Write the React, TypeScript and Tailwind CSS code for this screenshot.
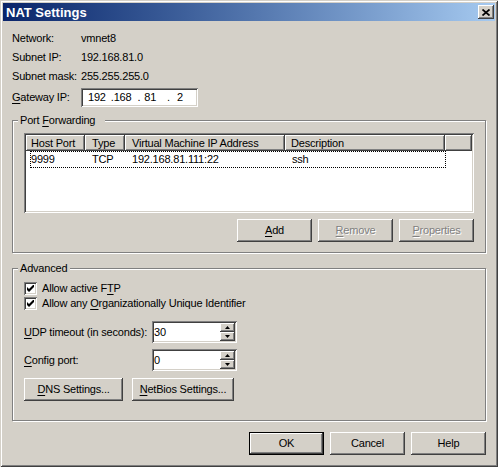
import React from "react";

const RAISED =
  "shadow-[inset_-1px_-1px_#404040,inset_1px_1px_#ffffff,inset_-2px_-2px_#808080,inset_2px_2px_#d4d0c8]";
const SUNKEN =
  "shadow-[inset_1px_1px_#808080,inset_-1px_-1px_#ffffff,inset_2px_2px_#404040,inset_-2px_-2px_#d4d0c8]";
const HEADER =
  "shadow-[inset_-1px_-1px_#404040,inset_1px_1px_#ffffff,inset_-2px_-2px_#808080]";

function U({ children }: { children: React.ReactNode }) {
  return <span className="underline underline-offset-[2px] decoration-1">{children}</span>;
}

function Btn({
  children,
  className = "",
  disabled = false,
  def = false,
}: {
  children: React.ReactNode;
  className?: string;
  disabled?: boolean;
  def?: boolean;
}) {
  return (
    <div
      className={`h-[23px] flex items-center justify-center bg-[#d4d0c8] ${RAISED} ${
        def ? "border border-black" : ""
      } ${disabled ? "text-[#808080] [text-shadow:1px_1px_0_#ffffff]" : ""} ${className}`}
    >
      {children}
    </div>
  );
}

function Group({
  label,
  children,
  className = "",
  labelPr = "",
}: {
  label: React.ReactNode;
  children: React.ReactNode;
  className?: string;
  labelPr?: string;
}) {
  return (
    <div
      className={`relative border border-[#808080] shadow-[inset_1px_1px_#ffffff,1px_1px_0_#ffffff] ${className}`}
    >
      <div className={`absolute left-[5px] top-[-7px] bg-[#d4d0c8] pl-[2px] leading-[13px] ${labelPr}`}>
        {label}
      </div>
      {children}
    </div>
  );
}

function Check({ label, className = "" }: { label: React.ReactNode; className?: string }) {
  return (
    <div className={`h-[13px] flex items-center ${className}`}>
      <div className={`w-[13px] h-[13px] bg-white ${SUNKEN} flex items-center justify-center`}>
        <svg width="7" height="7" viewBox="0 0 7 7">
          <path d="M0 2 L2 4 L7 -1 L7 2 L2 7 L0 5 Z" fill="#000" />
        </svg>
      </div>
      <span className="ml-[5px]">{label}</span>
    </div>
  );
}

function Arrow({ up }: { up: boolean }) {
  return (
    <svg width="5" height="3" viewBox="0 0 5 3">
      <polygon points={up ? "2.5,0 5,3 0,3" : "0,0 5,0 2.5,3"} fill="#000" />
    </svg>
  );
}

function Spin({
  label,
  value,
  className = "",
}: {
  label: React.ReactNode;
  value: string;
  className?: string;
}) {
  return (
    <div className={`flex items-center ${className}`}>
      <span className="w-[128px]">{label}</span>
      <div className={`w-[85px] h-[22px] bg-white ${SUNKEN} p-[2px] flex`}>
        <div className="flex-1 flex items-center">{value}</div>
        <div className="w-[15px] flex flex-col">
          <div className={`h-[9px] bg-[#d4d0c8] ${RAISED} flex items-center justify-center`}>
            <Arrow up />
          </div>
          <div className={`h-[9px] bg-[#d4d0c8] ${RAISED} flex items-center justify-center`}>
            <Arrow up={false} />
          </div>
        </div>
      </div>
    </div>
  );
}

function InfoRow({ label, value }: { label: React.ReactNode; value: string }) {
  return (
    <div className="h-[19px] flex items-center">
      <span className="w-[69px]">{label}</span>
      <span>{value}</span>
    </div>
  );
}

export default function App() {
  return (
    <div className="w-[498px] h-[467px] bg-[#d4d0c8] font-['Liberation_Sans',Arial,sans-serif] text-[11px] leading-[13px] tracking-[-0.2px] text-black p-[3px] flex flex-col shadow-[inset_1px_1px_#d4d0c8,inset_-1px_-1px_#404040,inset_2px_2px_#ffffff,inset_-2px_-2px_#808080] select-none">
      {/* Title bar */}
      <div className="h-[18px] bg-linear-to-r from-[#0a246a] to-[#a6caf0] flex items-center justify-between pl-[3px] pr-[1px]">
        <span className="text-white font-bold text-[13px] tracking-normal">NAT Settings</span>
        <div className={`w-[16px] h-[14px] bg-[#d4d0c8] ${RAISED} flex items-center justify-center`}>
          <svg width="8" height="7" viewBox="0 0 8 7">
            <path d="M0.5 0.5 L7.5 6.5 M7.5 0.5 L0.5 6.5" stroke="#000" strokeWidth="1.7" />
          </svg>
        </div>
      </div>

      <div className="flex flex-col px-[9px]">
        <div className="mt-[8px] flex flex-col">
          <InfoRow label="Network:" value="vmnet8" />
          <InfoRow label="Subnet IP:" value="192.168.81.0" />
          <InfoRow label="Subnet mask:" value="255.255.255.0" />
        </div>
        <div className="mt-[2px] h-[19px] flex items-center">
          <span className="w-[69px]">
            <U>G</U>ateway IP:
          </span>
          <div className={`w-[117px] h-[19px] bg-white ${SUNKEN} p-[2px] flex items-center`}>
            <span className="ml-[5px]">192</span>
            <span className="ml-[5px]">.</span>
            <span>168</span>
            <span className="ml-[6px]">.</span>
            <span className="ml-[4px]">81</span>
            <span className="ml-[11px]">.</span>
            <span className="ml-[7px]">2</span>
          </div>
        </div>

        {/* Port Forwarding */}
        <Group
          label={
            <>
              Port <U>F</U>orwarding
            </>
          }
          labelPr="pr-[10px]"
          className="mt-[13px] h-[133px]"
        >
          <div className="px-[11px] pt-[12px]">
            <div className={`h-[80px] bg-white ${SUNKEN} p-[2px] flex flex-col`}>
              <div className="h-[16px] grid grid-cols-[59px_40px_160px_160px_1fr] bg-[#d4d0c8]">
                <div className={`${HEADER} pl-[5px] flex items-center`}>Host Port</div>
                <div className={`${HEADER} pl-[7px] flex items-center`}>Type</div>
                <div className={`${HEADER} pl-[7px] flex items-center`}>Virtual Machine IP Address</div>
                <div className={`${HEADER} pl-[6px] flex items-center`}>Description</div>
                <div className={`${HEADER}`}></div>
              </div>
              <div className="ml-[4px] w-[416px] h-[17px] border border-dotted border-black grid grid-cols-[54px_40px_160px_1fr] items-center">
                <span>9999</span>
                <span className="pl-[7px]">TCP</span>
                <span className="pl-[7px]">192.168.81.111:22</span>
                <span className="pl-[7px]">ssh</span>
              </div>
            </div>
            <div className="mt-[6px] flex justify-end gap-[6px]">
              <Btn className="w-[75px]">
                <U>A</U>dd
              </Btn>
              <Btn className="w-[75px]" disabled>
                <U>R</U>emove
              </Btn>
              <Btn className="w-[75px]" disabled>
                <U>P</U>roperties
              </Btn>
            </div>
          </div>
        </Group>

        {/* Advanced */}
        <Group label="Advanced" labelPr="pr-[3px]" className="mt-[15px] h-[153px]">
          <div className="px-[11px] pt-[13px] flex flex-col">
            <Check
              label={
                <>
                  Allow active F<U>T</U>P
                </>
              }
            />
            <Check
              className="mt-[2px]"
              label={
                <>
                  Allow any <U>O</U>rganizationally Unique Identifier
                </>
              }
            />
            <Spin
              className="mt-[11px]"
              label={
                <>
                  <U>U</U>DP timeout (in seconds):
                </>
              }
              value="30"
            />
            <Spin
              className="mt-[6px]"
              label={
                <>
                  <U>C</U>onfig port:
                </>
              }
              value="0"
            />
            <div className="mt-[7px] flex gap-[9px]">
              <Btn className="w-[99px]">
                <U>D</U>NS Settings...
              </Btn>
              <Btn className="w-[102px]">
                <U>N</U>etBios Settings...
              </Btn>
            </div>
          </div>
        </Group>

        {/* Dialog buttons */}
        <div className="mt-[11px] flex justify-end gap-[6px]">
          <Btn className="w-[75px]" def>
            OK
          </Btn>
          <Btn className="w-[75px]">Cancel</Btn>
          <Btn className="w-[75px]">Help</Btn>
        </div>
      </div>
    </div>
  );
}
